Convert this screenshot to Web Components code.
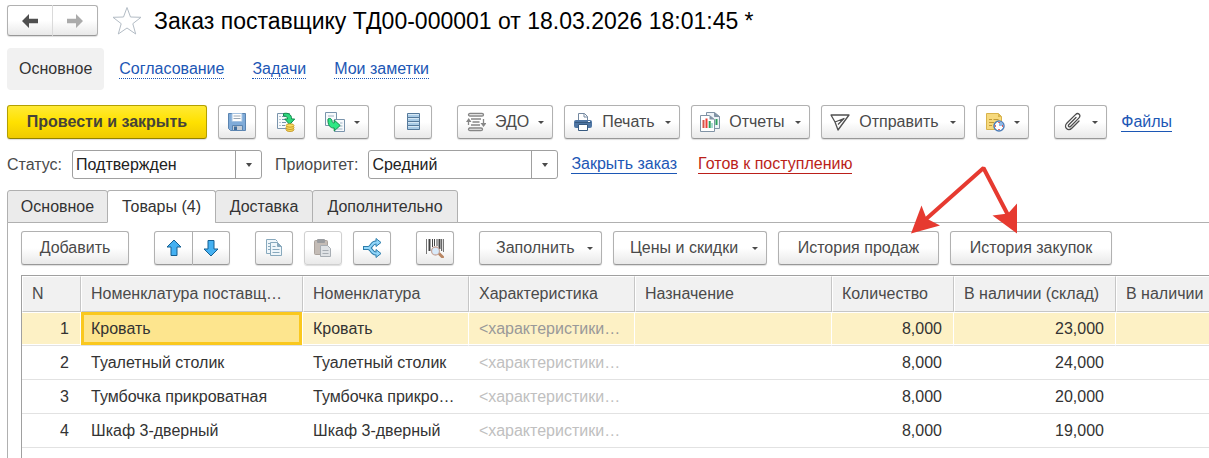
<!DOCTYPE html>
<html lang="ru">
<head>
<meta charset="utf-8">
<title>Заказ поставщику</title>
<style>
  body { margin: 0; background: #fff; color: #4a4a4a; font: 16px/20px "Liberation Sans", Arial, sans-serif; }
</style>
</head>
<body>
<order-page></order-page>

<script>
const ICONS = {
  back: '<path d="M2 10l7-7v4.800h9v4.400H9V17z" fill="#4f4f4f"/>',
  forward: '<path d="M18 10l-7-7v4.800H2v4.400h9V17z" fill="#ababab"/>',
  save: '<path d="M1.500 1.500h17v17H3.500l-2-2z" fill="#7fabd9" stroke="#5b84b0"/><path d="M5 1.500h10v8H5z" fill="#fff" stroke="#a5c3e2"/><path d="M6.500 4h7M6.500 6.500h7" stroke="#9aa7b4"/><path d="M5.500 18.500v-5h10v5z" fill="#c5cdd6" stroke="#5b84b0"/><path d="M7 14.500h3v3.500H7z" fill="#3e6c9c"/>',
  post: '<path d="M1.500 1.500h12v15h-12z" fill="#f7fafc" stroke="#7a94ac"/><path d="M3.500 4.500h1M6 4.500h4M3.500 7.500h1M6 7.500h6M3.500 10.500h1M6 10.500h4M3.500 13.500h1M6 13.500h3" stroke="#7a94ac"/><path d="M7.500 1.500c5-1 8 1 8.200 5.500h3l-5 5.500-5-5.500h2.800c0-2-1-3-4-3z" fill="#2ed87e" stroke="#128a4c"/><g fill="#f8dc62" stroke="#bd8a14" stroke-width=".8"><ellipse cx="14" cy="17.500" rx="4" ry="2"/><ellipse cx="14" cy="15.500" rx="4" ry="2"/><ellipse cx="14" cy="13.500" rx="4" ry="1.700"/></g>',
  basis: '<path d="M.5.500h11v13H.5z" fill="#f7fafc" stroke="#7a94ac"/><path d="M3 4h6M3 7h3" stroke="#9fb2c4"/><path d="M9.500 7.500h10v12h-10z" fill="#f7fafc" stroke="#7a94ac"/><path d="M15 11h2.500M15 14h2.500M12 17h5.500" stroke="#9fb2c4"/><path d="M3 7c2-1.500 4 0 4.200 2.500.2 1.200 1 1.500 2 1.500V8l6 5.500-6 5.500v-3C5 16.500 2.500 12.500 3 7z" fill="#2ee884" stroke="#128a4c"/>',
  list: '<g fill="#a9cbe6" stroke="#55799b"><path d="M4.500 1.500h12v4h-12zM4.500 5.500h12v4h-12zM4.500 9.500h12v4h-12zM4.500 13.500h12v4h-12z"/></g><path d="M5 2.500h11M5 6.500h11M5 10.500h11M5 14.500h11" stroke="#d6e8f5"/>',
  edi: '<g fill="none" stroke="#868686" stroke-width="1.300"><path d="M6 1.500h10c2 0 2 2.500 0 2.500H4c-2 0-2-2.500 0-2.500h2M3 16h12c2 0 2 2.500 0 2.500H4c-2 0-2-2.500 0-2.500"/><path d="M5 7h10M6.500 10h7M5 13h9M2.500 13V9M17.500 7v4.500"/></g><path d="M0 10l2.700-4L5.500 10zM14.500 11h6l-3 4z" fill="#868686"/>',
  print: '<path d="M5.500 8V1.500h6l3 3V8" fill="#fff" stroke="#7488a0"/><path d="M11 1.500V5h3.500" fill="none" stroke="#7488a0"/><rect x="1" y="8" width="18" height="8" rx="2" fill="#4f76a4"/><path d="M2 10.500h16" stroke="#36597f"/><path d="M15 9.500h2" stroke="#fff"/><path d="M5.500 12.500h9v6h-9z" fill="#fff" stroke="#36597f"/>',
  reports: '<path d="M6.500.500h8l5 4v12h-13z" fill="#eef3f7" stroke="#8093a5"/><path d="M14.500.500v4h5" fill="#8093a5" stroke="#8093a5"/><path d="M16.500 7v6" stroke="#2da15c" stroke-width="2"/><path d="M.5 3.500h9l5 4v12H.5z" fill="#fff" stroke="#8093a5"/><path d="M9.500 3.500v4h5z" fill="#8093a5"/><path d="M3.500 8v8" stroke="#d65349" stroke-width="2"/><path d="M6.500 6.500V16" stroke="#ed3e36" stroke-width="2"/><path d="M9.700 9v7" stroke="#2da15c" stroke-width="2"/><path d="M12 11v5" stroke="#55b7a2"/>',
  send: '<path d="M1 3h18L8 18 5 10zM5 10l9-3.500-6 6" fill="none" stroke="#505050" stroke-width="1.300" stroke-linejoin="round"/>',
  reminder: '<path d="M1.500 1.500h12l3 3v13h-15z" fill="#f6d97d" stroke="#d8b34c"/><path d="M13 1.500v3.500h3.500" fill="#d8b34c"/><path d="M4 7.500h3M8.500 7.500h5M4 10.500h5M4 13.500h3" stroke="#c29a36"/><circle cx="14" cy="14" r="5" fill="#fff" stroke="#4d7db8" stroke-width="1.500"/><path d="M14 14V9.500a4.500 4.500 0 0 1 4.500 4.500z" fill="#8eb8e6"/><path d="M14 10v1M14 17v1M10 14h1M17 14h1" stroke="#e3362e" stroke-width="1.400"/>',
  clip: '<path d="M13 5.500l-7 7c-1.500 1.500.3 3.300 1.800 1.800l8-8.200c3-3.200-.8-6-3.300-3.500L4 11c-4 4 1 9 5 5l7-7" fill="none" stroke="#4d4d4d" stroke-width="1.300" stroke-linecap="round"/>',
  up: '<path d="M10 2l7 7h-4v8.500H7V9H3z" fill="#45b1f2" stroke="#155f91" stroke-linejoin="round"/>',
  down: '<path d="M10 18l7-7h-4V2.500H7V11H3z" fill="#45b1f2" stroke="#155f91" stroke-linejoin="round"/>',
  copy: '<path d="M6 15.500H2.500v-14h9l2 2" fill="#eff6fa" stroke="#88a9bd"/><path d="M4 5.500h2M4 8.500h2M4 11.500h2" stroke="#88a9bd"/><path d="M6.500 4.500h7l4 4v9h-11z" fill="#eff6fa" stroke="#88a9bd"/><path d="M13.500 4.500v4h4z" fill="#88a9bd" stroke="#88a9bd"/><path d="M8.500 8.500h3M8.500 11.500h7M8.500 14.500h7" stroke="#88a9bd"/>',
  paste: '<rect x="1.500" y="2.500" width="13" height="14" rx="1" fill="#c4bcb6" stroke="#aaa29c"/><rect x="4" y="1" width="8" height="4" rx="1" fill="#9a9c9f"/><path d="M7.500 7.500h7l3 3v8h-10z" fill="#dfe2e5" stroke="#a7adb3"/><path d="M9.500 12.500h6M9.500 15.500h6" stroke="#a7adb3"/>',
  split: '<path d="M1 10h5c4 0 3-5.500 8-5.500h1M6 10c4 0 3 5.500 8 5.500h1" fill="none" stroke="#2d7dab" stroke-width="4"/><path d="M14 .5l5 4-5 4zM14 11.500l5 4-5 4z" fill="#91d6fa" stroke="#2d7dab"/><path d="M2 10h4c4 0 3-5.500 8-5.500h1M6 10c4 0 3 5.500 8 5.500h1" fill="none" stroke="#91d6fa" stroke-width="2"/>',
  barcode: '<path d="M1.500 1v15M18.500 1v13" stroke="#777"/><path d="M4.500 1v12M14.500 1v10" stroke="#444" stroke-width="2"/><path d="M7.500 1v8M9.500 1v7M12 1v7M16.700 1v12" stroke="#444"/><path d="M13.500 15l4 4" stroke="#b98663" stroke-width="3" stroke-linecap="round"/><circle cx="10.500" cy="13" r="4" fill="#d9eafa" stroke="#c6a9a0" stroke-width="1.300"/>',
  star: '<path d="M15 1.500l3.500 9.500 10.500.3-8.200 6.400L23.700 28 15 22 6.300 28l2.900-10.300L1 11.300l10.500-.3z" fill="#fff" stroke="#b3bcc5" stroke-linejoin="round"/>'
};

/* Base class: each element keeps its template in an open shadow root */
class Base extends HTMLElement {
  connectedCallback() {
    if (this.shadowRoot) return;
    this.attachShadow({ mode: 'open' }).innerHTML = this.render();
  }
}

customElements.define('ui-icon', class extends Base {
  render() {
    const n = this.getAttribute('name');
    const s = n === 'star' ? 30 : 20;
    return `<style>:host{display:block;flex:none;width:${s}px;height:${s}px}svg{display:block}</style>
      <svg width="${s}" height="${s}" viewBox="0 0 ${s} ${s}" aria-hidden="true">${ICONS[n]}</svg>`;
  }
});

customElements.define('ui-button', class extends Base {
  render() {
    const has = a => this.hasAttribute(a);
    const icon = this.getAttribute('icon');
    const label = this.getAttribute('label');
    return `<style>
      :host{display:block;flex:none}
      button{box-sizing:border-box;display:flex;align-items:center;justify-content:center;gap:9px;
        height:34px;min-width:${this.getAttribute('width') || 0}px;padding:0 8px;font:inherit;color:#4a4a4a;white-space:nowrap;
        border:1px solid #b1b1b1;border-bottom-color:#989898;border-radius:3px;
        background:linear-gradient(#fff 0%,#fff 50%,#e9e9e9 100%);box-shadow:0 1px 1px #0002}
      button.text{padding:0 16px}
      button.text.menu{padding-right:8px}
      button.menu .label{flex:1}
      button.primary{font-weight:700;color:#45433a;border-color:#b3a000;border-bottom-color:#918100;
        background:linear-gradient(#ffea35,#ffe100 50%,#efca00)}
      button:disabled{border-color:#d0d0d0}
      :host([join=left]) button{border-radius:3px 0 0 3px}
      :host([join=right]) button{border-radius:0 3px 3px 0;border-left:0}
      :host([nav]) button{height:31px;padding:0 12px}
      :host([nav][join=left]) button{border-right-color:#ddd}
      .caret{flex:none;width:0;border:3px solid transparent;border-top-color:#4a4a4a;border-bottom:0}
    </style>
    <button type="button" class="${icon ? '' : 'text'} ${has('menu') ? 'menu' : ''} ${has('primary') ? 'primary' : ''}"
      ${has('disabled') ? 'disabled' : ''} ${label ? `aria-label="${label}"` : ''}>
      ${icon ? `<ui-icon name="${icon}"></ui-icon>` : ''}${label ? '' : '<span class="label"><slot></slot></span>'}${has('menu') ? '<span class="caret"></span>' : ''}
    </button>`.replace('button.menu .label{flex:1}', 'button.menu .label{flex:1;text-align:left}');
  }
});

customElements.define('ui-bar', class extends Base {
  render() {
    return `<style>:host{display:flex;align-items:center;gap:11px}
      ::slotted([group]){margin-left:14px}</style><slot></slot>`;
  }
});

customElements.define('ui-pair', class extends Base {
  render() { return '<style>:host{display:flex;flex:none}</style><slot></slot>'; }
});

customElements.define('ui-link', class extends Base {
  render() {
    return `<style>:host{display:block;flex:none}
      a{display:block;line-height:18px;color:#1c57b5;text-decoration:none;border-bottom:1px solid}
      :host([dotted]) a{border-bottom-style:dotted}
      :host([alert]) a{color:#bb1f1a}</style><a href="#"><slot></slot></a>`;
  }
});

customElements.define('ui-select', class extends Base {
  render() {
    return `<style>
      :host{display:flex;align-items:center;flex:none}
      label{margin-right:10px}
      .box{display:grid;grid-template-columns:1fr 26px;width:190px;height:29px;box-sizing:border-box;
        border:1px solid #a0a0a0;border-radius:3px;background:#fff}
      select{grid-area:1/1/2/3;appearance:none;border:0;background:none;padding:0 30px 0 3px;margin:0;font:inherit;color:#222;min-width:0}
      .drop{grid-area:1/2;display:flex;align-items:center;justify-content:center;border-left:1px solid #a0a0a0;pointer-events:none}
      .drop::before{content:"";border:3px solid transparent;border-top:4px solid #4a4a4a;border-bottom:0}
    </style>
    <label for="s">${this.getAttribute('label')}</label>
    <div class="box"><select id="s"><option>${this.getAttribute('value')}</option></select><span class="drop"></span></div>`;
  }
});

customElements.define('ui-tabs', class extends Base {
  render() {
    const tabs = this.getAttribute('tabs').split('|');
    const widths = this.getAttribute('widths').split('|');
    const active = +this.getAttribute('active');
    return `<style>
      :host{display:flex;border-bottom:1px solid #b0b0b0}
      button{box-sizing:border-box;height:33px;margin:0 -1px -1px 0;padding:0 12px;font:inherit;color:#333;
        border:1px solid #b0b0b0;border-radius:3px 3px 0 0;background:#ebebeb;white-space:nowrap}
      button[aria-selected=true]{background:#fff;border-bottom-color:#fff}
    </style>${tabs.map((t, i) => `<button type="button" role="tab" aria-selected="${i === active}" style="min-width:${widths[i]}px">${t}</button>`).join('')}`;
  }
  connectedCallback() { super.connectedCallback(); this.setAttribute('role', 'tablist'); }
});

customElements.define('pointer-arrows', class extends Base {
  render() {
    return `<style>:host{position:absolute;left:127px;top:-68px;pointer-events:none}svg{display:block}</style>
      <svg width="120" height="76" viewBox="905 163 120 76" aria-hidden="true">
        <path d="M925 220L983.500 168 1009 217" fill="none" stroke="#e63a30" stroke-width="4" stroke-linejoin="bevel"/>
        <path d="M911 233.500L921.500 205.500 926.500 218.500 940 225.500zM1017 233.500V203.500L1008 213.500 992.500 215.500z" fill="#e63a30"/>
      </svg>`;
  }
});

customElements.define('history-buttons', class extends Base {
  render() {
    return `<style>:host{display:flex;gap:11px;position:relative;flex:none}</style>
      <ui-button width="161">История продаж</ui-button><ui-button width="162">История закупок</ui-button>
      <pointer-arrows></pointer-arrows>`;
  }
});

customElements.define('goods-table', class extends Base {
  render() {
    const rows = [
      ['Кровать', 'Кровать', '23,000'],
      ['Туалетный столик', 'Туалетный столик', '24,000'],
      ['Тумбочка прикроватная', 'Тумбочка прикро…', '20,000'],
      ['Шкаф 3-дверный', 'Шкаф 3-дверный', '19,000']
    ];
    return `<style>
      :host{display:block;overflow:hidden;border:solid #a0a0a0;border-width:1px 0 0 1px}
      table{width:100%;min-width:1187px;table-layout:fixed;border-collapse:separate;border-spacing:0}
      th,td{box-sizing:border-box;padding:0 10px;text-align:left;font-weight:400;white-space:nowrap}
      th{height:36px;background:#f1f1f1;border:1px solid #fff;border-right-color:#c6c6c6;border-bottom-color:#c6c6c6;padding:0 9px;color:#4a4a4a}
      td{height:34px;color:#333;border-bottom:1px solid #e2e2e2;background-clip:padding-box}
      th:last-child{border-right:0}
      td.n{text-align:right;padding-right:12px}
      .ghost{color:#c0c0c0}
      .current td{background:#fdf1c5;border-right:1px solid #fff;box-shadow:inset 0 1px #fff,inset 0 -1px #fff}
      .current td.n{padding-right:11px}
      .current td:last-child{border-right:0}
      .current .ghost{color:#999}
      .current .cell{background:#fde58e;box-shadow:inset 0 0 0 3px #fac81e}
    </style>
    <table>
      <colgroup><col style="width:59px"><col style="width:222px"><col style="width:166px"><col style="width:166px"><col style="width:197px"><col style="width:122px"><col style="width:162px"><col></colgroup>
      <thead><tr><th>N</th><th>Номенклатура поставщ…</th><th>Номенклатура</th><th>Характеристика</th><th>Назначение</th><th>Количество</th><th>В наличии (склад)</th><th>В наличии</th></tr></thead>
      <tbody>${rows.map(([supplier, name, qty], i) => `<tr class="${i ? '' : 'current'}"><td class="n">${i + 1}</td><td class="cell">${supplier}</td><td>${name}</td><td class="ghost">&lt;характеристики…</td><td></td><td class="n">8,000</td><td class="n">${qty}</td><td></td></tr>`).join('')}</tbody>
    </table>`;
  }
});

customElements.define('order-page', class extends Base {
  render() {
    return `<style>
      :host{display:flex;flex-direction:column;box-sizing:border-box;min-height:100vh;padding:5px 0 0 7px;overflow:hidden}
      header{display:flex;align-items:center;height:31px}
      header ui-icon{margin:0 12px 0 14px}
      h1{margin:0;font-size:23px;line-height:28px;font-weight:400;color:#000;white-space:nowrap}
      nav{display:flex;align-items:center;gap:28px;margin-top:12px}
      .here{padding:11px 12px;margin-right:-13px;border-radius:4px;background:#f1f1f1;color:#333}
      .commands{margin-top:15px}
      .commands ui-link{margin-left:3px}
      .fields{display:flex;align-items:center;gap:13px;margin-top:11px}
      .fields ui-link+ui-link{margin-left:8px}
      ui-tabs{margin-top:11px}
      main{flex:1;display:flex;flex-direction:column;border-left:1px solid #b0b0b0;padding:8px 0 0 13px}
      goods-table{flex:1;margin-top:10px}
    </style>
    <header>
      <ui-pair><ui-button nav join="left" icon="back" label="Назад"></ui-button><ui-button nav join="right" icon="forward" label="Вперед"></ui-button></ui-pair>
      <ui-icon name="star"></ui-icon>
      <h1>Заказ поставщику ТД00-000001 от 18.03.2026 18:01:45 *</h1>
    </header>
    <nav><span class="here">Основное</span><ui-link dotted>Согласование</ui-link><ui-link dotted>Задачи</ui-link><ui-link dotted>Мои заметки</ui-link></nav>
    <ui-bar class="commands">
      <ui-button primary width="200">Провести и закрыть</ui-button>
      <ui-button icon="save" label="Записать"></ui-button>
      <ui-button icon="post" label="Провести"></ui-button>
      <ui-button icon="basis" menu label="Создать на основании"></ui-button>
      <ui-button group icon="list" label="Движения"></ui-button>
      <ui-button group icon="edi" menu>ЭДО</ui-button>
      <ui-button icon="print" menu width="116">Печать</ui-button>
      <ui-button icon="reports" menu width="119">Отчеты</ui-button>
      <ui-button icon="send" menu width="144">Отправить</ui-button>
      <ui-button icon="reminder" menu label="Напоминание"></ui-button>
      <ui-button group icon="clip" menu label="Присоединить"></ui-button>
      <ui-link>Файлы</ui-link>
    </ui-bar>
    <div class="fields">
      <ui-select label="Статус:" value="Подтвержден"></ui-select>
      <ui-select label="Приоритет:" value="Средний"></ui-select>
      <ui-link>Закрыть заказ</ui-link>
      <ui-link alert>Готов к поступлению</ui-link>
    </div>
    <ui-tabs tabs="Основное|Товары (4)|Доставка|Дополнительно" widths="101|109|98|146" active="1"></ui-tabs>
    <main>
      <ui-bar>
        <ui-button width="108">Добавить</ui-button>
        <ui-pair group><ui-button join="left" icon="up" label="Вверх" width="39"></ui-button><ui-button join="right" icon="down" label="Вниз"></ui-button></ui-pair>
        <ui-button group icon="copy" label="Копировать"></ui-button>
        <ui-button icon="paste" disabled label="Вставить"></ui-button>
        <ui-button icon="split" label="Разбить строку"></ui-button>
        <ui-button group icon="barcode" label="Поиск по штрихкоду"></ui-button>
        <ui-button group menu width="123">Заполнить</ui-button>
        <ui-button menu width="154">Цены и скидки</ui-button>
        <history-buttons></history-buttons>
      </ui-bar>
      <goods-table></goods-table>
    </main>`;
  }
});
</script>
</body>
</html>
